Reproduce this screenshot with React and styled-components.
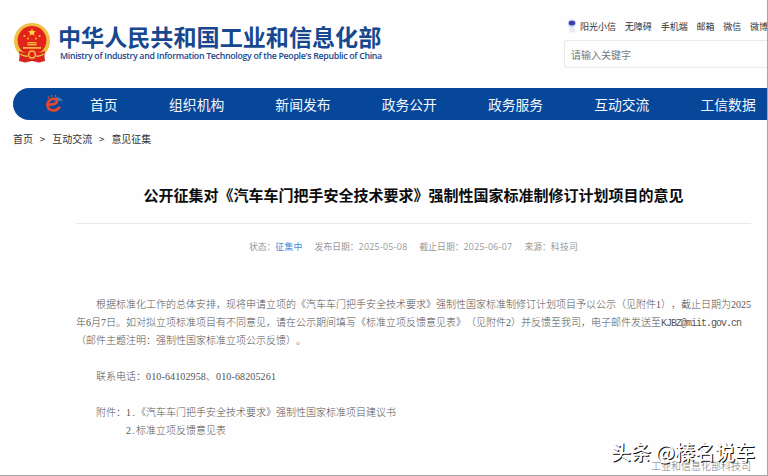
import React from "react";
import styled, { createGlobalStyle, css } from "styled-components";

const navItems = [
  "首页",
  "组织机构",
  "新闻发布",
  "政务公开",
  "政务服务",
  "互动交流",
  "工信数据",
];

const toolLinks = ["阳光小信", "无障碍", "手机端", "邮箱", "微信", "微博"];

const meta = [
  { label: "状态：", value: "征集中", active: true },
  { label: "发布日期：", value: "2025-05-08" },
  { label: "截止日期：", value: "2025-06-07" },
  { label: "来源：", value: "科技司" },
];

function Emblem() {
  return (
    <svg width="38" height="42" viewBox="0 0 38 42">
      <path d="M7 31 L6 39 L12 40.500 L19 39 L26 40.500 L32 39 L31 31Z" fill="#d8221c" />
      <circle cx="19" cy="19" r="18" fill="#efc044" />
      <circle cx="19" cy="18.5" r="14.4" fill="#e2231a" />
      <path
        d="M19 6.5l1.1 2.6 2.8.2-2.1 1.8.7 2.7-2.5-1.500-2.500 1.500.7-2.700-2.100-1.800 2.800-.2z"
        fill="#ffd84a"
      />
      <g fill="#f9b23c">
        <circle cx="11.5" cy="14" r="1.1" />
        <circle cx="15" cy="16.5" r="1.1" />
        <circle cx="23" cy="16.5" r="1.1" />
        <circle cx="26.5" cy="14" r="1.1" />
        <path d="M15 20h8l1 1.600H14zM14.500 22h9v1.500h-9zM10 25h18v1.800H10z" />
      </g>
      <path d="M6 29q13 6 26 0l-1 6q-12 4-24 0z" fill="#d8221c" />
      <circle cx="19" cy="32.500" r="3.400" fill="#e2231a" stroke="#efc044" strokeWidth="1.500" />
      <path d="M7 32q5 3 8 2M31 32q-5 3-8 2" fill="none" stroke="#efc044" strokeWidth="1.300" />
    </svg>
  );
}

function SwirlLogo() {
  return (
    <svg width="20" height="20" viewBox="0 0 20 20" fill="none">
      <path d="M11 3.500q6-1 8 4-3-1.500-5.500-.5z" fill="#4c78b4" />
      <path
        d="M5.5 10.500C10 11 13.500 9 12.700 6.500 12 4 7 4 4.500 7.500 2 11.500 4.500 16.500 9 16.500c3 0 5-1.200 6.200-3"
        stroke="#e5482f"
        strokeWidth="2.700"
        strokeLinecap="round"
      />
      <path d="M4 4.500l1-2M7.500 3l.5-2M11 2.700l1-1.700" stroke="#e5482f" strokeWidth="1.200" />
    </svg>
  );
}

function Mascot() {
  return (
    <svg width="10" height="15" viewBox="0 0 10 15">
      <path d="M2 8h5.500l.8 5.500H2.500z" fill="#e9ebf4" />
      <ellipse cx="4.800" cy="4.300" rx="4" ry="3.800" fill="#c3c9ee" />
      <ellipse cx="5" cy="4" rx="3.200" ry="2.300" fill="#3540ad" />
    </svg>
  );
}

function App() {
  return (
    <>
      <GlobalStyle />
      <Page>
        <Header>
          <Brand>
            <Emblem />
            <BrandText>
              <h1>中华人民共和国工业和信息化部</h1>
              <p>Ministry of Industry and Information Technology of the People's Republic of China</p>
            </BrandText>
          </Brand>
          <Tools>
            <ToolLinks>
              <Mascot />
              {toolLinks.map((link) => (
                <a key={link}>{link}</a>
              ))}
            </ToolLinks>
            <SearchBox>请输入关键字</SearchBox>
          </Tools>
        </Header>

        <Nav>
          <SwirlLogo />
          {navItems.map((item, i) => (
            <NavItem key={item} $first={i === 0}>
              {item}
            </NavItem>
          ))}
        </Nav>

        <Breadcrumb>
          <span>首页</span>
          <i>&gt;</i>
          <span>互动交流</span>
          <i>&gt;</i>
          <span>意见征集</span>
        </Breadcrumb>

        <Article>
          <Title>公开征集对《汽车车门把手安全技术要求》强制性国家标准制修订计划项目的意见</Title>
          <Meta>
            {meta.map((m) => (
              <MetaItem key={m.label} $active={m.active}>
                {m.label}
                <b>{m.value}</b>
              </MetaItem>
            ))}
          </Meta>
          <Body>
            <Line $indent={20}>
              根据标准化工作的总体安排，现将申请立项的《汽车车门把手安全技术要求》强制性国家标准制修订计划项目予以公示（见附件
              <Num>1</Num>），截止日期为<Num>2025</Num>
            </Line>
            <Line>
              年<Num>6</Num>月<Num>7</Num>
              日。如对拟立项标准项目有不同意见，请在公示期间填写《标准立项反馈意见表》（见附件
              <Num>2</Num>）并反馈至我司，电子邮件发送至<Mail>KJBZ@miit.gov.cn</Mail>
            </Line>
            <Line>（邮件主题注明：强制性国家标准立项公示反馈）。</Line>
            <Line />
            <Line $indent={20}>
              联系电话：<Num $gap={0.14}>010-64102958</Num>、<Num $gap={0.14}>010-68205261</Num>
            </Line>
            <Line />
            <Line $indent={20}>
              附件：<Num $gap={1.25}>1.</Num>《汽车车门把手安全技术要求》强制性国家标准项目建议书
            </Line>
            <Line $indent={50}>
              <Num $gap={1.25}>2.</Num>标准立项反馈意见表
            </Line>
          </Body>
          <Signature>工业和信息化部科技司</Signature>
        </Article>
        <Watermark>头条 @榛名说车</Watermark>
      </Page>
    </>
  );
}

export default App;

const GlobalStyle = createGlobalStyle`
  * {
    box-sizing: border-box;
    margin: 0;
    padding: 0;
  }
  body {
    background: #fefefe;
    font-family: "Noto Sans CJK SC", sans-serif;
    text-spacing-trim: space-all;
    overflow: hidden;
  }
`;

const Page = styled.div`
  position: relative;
  width: 768px;
  height: 476px;
  overflow: hidden;
  border-right: 1px solid #a5a5a5;
  border-bottom: 1px solid #a5a5a5;
  white-space: nowrap;
`;
const Header = styled.header`
  display: flex;
  justify-content: space-between;
  height: 88px;
  padding-left: 13px;
`;
const Brand = styled.div`
  display: flex;
  gap: 7px;
  padding-top: 22px;
`;
const BrandText = styled.div`
  color: #17488f;
  h1 {
    font-size: 23.1px;
    line-height: 28px;
    font-weight: 700;
  }
  p {
    margin-left: 2px;
    font-family: "Open Sans", sans-serif;
    font-size: 8.8px;
    letter-spacing: -0.31px;
    line-height: 13px;
    font-weight: 600;
  }
`;
const Tools = styled.div`
  width: 203px;
  padding-top: 18px;
`;
const ToolLinks = styled.div`
  display: flex;
  align-items: center;
  height: 16px;
  padding-left: 3px;
  font-size: 9px;
  color: #333;
  a {
    margin-right: 8.8px;
  }
  svg {
    flex: none;
    margin-right: 3px;
  }
`;
const SearchBox = styled.div`
  height: 28px;
  margin-top: 6px;
  padding-left: 6px;
  border: 1px solid #e9e9e9;
  border-right: none;
  border-radius: 3px 0 0 3px;
  font-size: 10px;
  line-height: 27px;
  color: #777;
`;
const Nav = styled.nav`
  display: flex;
  align-items: center;
  height: 32px;
  margin-left: 13px;
  padding-left: 31px;
  border-radius: 16px 0 0 16px;
  background: #06479a;
  svg {
    flex: none;
  }
`;
const NavItem = styled.a`
  flex: none;
  width: ${({ $first }) => ($first ? "79.5px" : "106.3px")};
  text-align: center;
  font-size: 13.8px;
  color: #f3f8ff;
`;
const Breadcrumb = styled.div`
  display: flex;
  align-items: center;
  height: 38px;
  padding: 0 0 2px 13px;
  font-size: 10px;
  color: #333;
  i {
    width: 19.2px;
    text-align: center;
    font-style: normal;
  }
`;
const Article = styled.main`
  display: flex;
  flex-direction: column;
  padding: 24px 16px 0 76px;
`;
const Title = styled.h2`
  height: 42px;
  border-bottom: 1px solid #e8e8e8;
  text-align: center;
  font-size: 15px;
  line-height: 26px;
  font-weight: 700;
  color: #0c0c0c;
`;
const Meta = styled.div`
  display: flex;
  justify-content: center;
  gap: 12px;
  height: 44px;
  line-height: 45px;
  font-size: 8.8px;
  color: #999;
`;
const MetaItem = styled.span`
  b {
    font-family: "Open Sans", "Noto Sans CJK SC", sans-serif;
    font-weight: 400;
    letter-spacing: 0.3px;
    ${({ $active }) =>
      $active &&
      css`
        color: #3f8fe0;
      `}
  }
`;
const Body = styled.section`
  padding-top: 27px;
  font-size: 10px;
  line-height: 18px;
  color: #555;
`;
const Line = styled.p`
  height: 18px;
  padding-left: ${({ $indent }) => $indent || 0}px;
  font-weight: 300;
`;
const Num = styled.span`
  font-family: "Liberation Serif", serif;
  letter-spacing: ${({ $gap }) => $gap || 0}px;
`;
const Mail = styled.span`
  font-family: "Liberation Mono", monospace;
  letter-spacing: -1px;
`;
const Signature = styled.p`
  margin-top: 18px;
  text-align: right;
  font-size: 10px;
  line-height: 18px;
  font-weight: 300;
  color: #777;
`;
// sits on top of the signature line
const Watermark = styled.div`
  position: absolute;
  right: 12px;
  bottom: 9px;
  font-size: 20px;
  line-height: 28px;
  font-weight: 500;
  color: #fff;
  text-shadow: 1px 1px 0 #111;
`;
